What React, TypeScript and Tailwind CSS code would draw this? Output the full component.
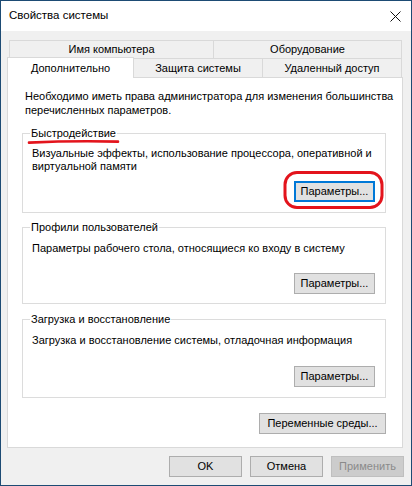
import React from "react";

function Btn({
  children,
  className = "",
  focused = false,
  disabled = false,
}: {
  children: React.ReactNode;
  className?: string;
  focused?: boolean;
  disabled?: boolean;
}) {
  const base =
    "h-[21px] flex items-center justify-center leading-none " +
    (disabled
      ? "bg-[#cccccc] border border-[#bfbfbf] text-[#8a8a8a]"
      : focused
      ? "bg-[#e1e1e1] border-2 border-[#0078d7] text-black"
      : "bg-[#e1e1e1] border border-[#adadad] text-black");
  return <div className={base + " " + className}>{children}</div>;
}

export default function App() {
  return (
    <div className="relative w-[412px] h-[486px] bg-[#f0f0f0] border border-[#1d4b74] flex flex-col font-['Liberation_Sans',Arial,sans-serif] text-[11px] text-black">
      {/* Title bar */}
      <div className="h-[30px] bg-white flex items-center justify-between pl-[8px] pr-[10px]">
        <span className="text-[11.5px]">Свойства системы</span>
        <svg width="11" height="11" viewBox="0 0 11 11">
          <path d="M0.5 0.5 L10.5 10.5 M10.5 0.5 L0.5 10.5" stroke="#111" strokeWidth="1" />
        </svg>
      </div>

      {/* Body */}
      <div className="flex-1 flex flex-col pl-[6px] pr-[8px] pt-[9px]">
        {/* Tabs */}
        <div className="flex flex-col">
          <div className="flex h-[18px] ml-[2px] mr-[1px]">
            <div className="w-[204px] border-l border-t border-[#d9d9d9] flex items-center justify-center">
              Имя компьютера
            </div>
            <div className="flex-1 border-l border-t border-r border-[#d9d9d9] flex items-center justify-center">
              Оборудование
            </div>
          </div>
          <div className="flex h-[19px] items-end mr-[1px]">
            <div className="relative z-10 w-[127px] h-[21px] -mb-px bg-white border border-b-0 border-[#d9d9d9] flex items-center justify-center">
              Дополнительно
            </div>
            <div className="w-[129px] h-[19px] border-t border-r border-[#d9d9d9] flex items-center justify-center">
              Защита системы
            </div>
            <div className="flex-1 h-[19px] border-t border-r border-[#d9d9d9] flex items-center justify-center">
              Удаленный доступ
            </div>
          </div>
        </div>

        {/* Panel */}
        <div className="h-[371px] bg-white border border-[#d9d9d9] flex flex-col pt-[11px]">
          <p className="pl-[17px] leading-[14px] whitespace-nowrap">
            Необходимо иметь права администратора для изменения большинства
            <br />
            перечисленных параметров.
          </p>

          {/* Group 1 */}
          <fieldset className="mt-[9px] ml-[14px] w-[364px] border border-[#dcdcdc] pl-[9px] pr-[10px] pt-[7px] pb-[10px] flex flex-col">
            <legend className="-ml-[2px] px-[1px] leading-[14px]">Быстродействие</legend>
            <p className="leading-[13px] whitespace-nowrap">
              Визуальные эффекты, использование процессора, оперативной и
              <br />
              виртуальной памяти
            </p>
            <div className="flex justify-end mt-[8px]">
              <Btn focused className="w-[81px]">Параметры...</Btn>
            </div>
          </fieldset>

          {/* Group 2 */}
          <fieldset className="mt-[7px] ml-[14px] w-[364px] border border-[#dcdcdc] pl-[9px] pr-[10px] pt-[7px] pb-[9px] flex flex-col">
            <legend className="-ml-[2px] px-[1px] leading-[14px]">Профили пользователей</legend>
            <p className="leading-[14px] whitespace-nowrap">
              Параметры рабочего стола, относящиеся ко входу в систему
            </p>
            <div className="flex justify-end mt-[18px]">
              <Btn className="w-[81px]">Параметры...</Btn>
            </div>
          </fieldset>

          {/* Group 3 */}
          <fieldset className="mt-[8px] ml-[14px] w-[364px] border border-[#dcdcdc] pl-[9px] pr-[10px] pt-[7px] pb-[10px] flex flex-col">
            <legend className="-ml-[2px] px-[1px] leading-[14px]">Загрузка и восстановление</legend>
            <p className="leading-[14px] whitespace-nowrap">
              Загрузка и восстановление системы, отладочная информация
            </p>
            <div className="flex justify-end mt-[19px]">
              <Btn className="w-[81px]">Параметры...</Btn>
            </div>
          </fieldset>

          <div className="flex justify-end mt-[15px] mr-[16px]">
            <Btn className="w-[127px]">Переменные среды...</Btn>
          </div>
        </div>

        {/* Bottom buttons */}
        <div className="flex justify-end gap-[8px] mt-[8px] -mr-px">
          <Btn className="w-[73px]">OK</Btn>
          <Btn className="w-[73px]">Отмена</Btn>
          <Btn disabled className="w-[73px]">Применить</Btn>
        </div>
      </div>

      {/* Red annotation overlay */}
      <svg
        className="absolute left-[-1px] top-[-1px] pointer-events-none"
        width="412"
        height="486"
        viewBox="0 0 412 486"
      >
        <path
          d="M29 142.6 Q 72 140.6 118 141.6"
          stroke="#e3141c"
          strokeWidth="2.6"
          fill="none"
          strokeLinecap="round"
        />
        <rect
          x="285"
          y="172.5"
          width="97"
          height="35"
          rx="12"
          ry="12"
          stroke="#e3141c"
          strokeWidth="3"
          fill="none"
        />
      </svg>
    </div>
  );
}
